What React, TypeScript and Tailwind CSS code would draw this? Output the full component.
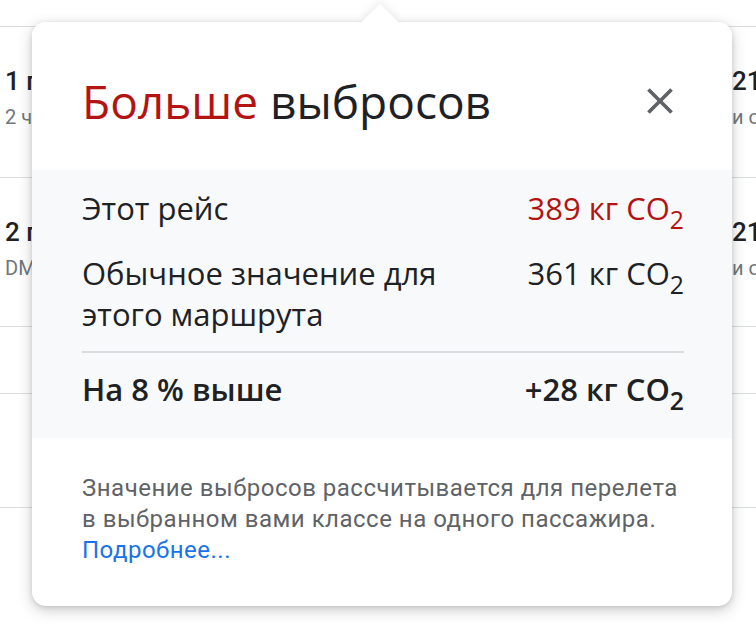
const roboto = { fontFamily: 'Roboto, "Noto Sans", sans-serif' };
const display = { fontFamily: '"Open Sans", "Noto Sans", sans-serif' };

function Co2({ value }: { value: string }) {
  return (
    <span className="whitespace-nowrap">
      {value} кг CO<sub className="relative top-[9px] align-baseline text-[0.8em]">2</sub>
    </span>
  );
}

function ListRow({ h, left, leftSub, right, rightSub }: { h: string; left?: string; leftSub?: string; right?: string; rightSub?: string }) {
  return (
    <div className={`${h} flex justify-between border-b border-[#dadce0]`}>
      <div className="pl-[5px] pt-[36px]">
        {left && <div className="text-[26px] font-medium leading-[36px] text-[#202124]">{left}</div>}
        {leftSub && <div className="mt-[4px] text-[20px] leading-[28px] text-[#70757a]">{leftSub}</div>}
      </div>
      <div className="w-[24px] overflow-hidden pt-[36px] whitespace-nowrap">
        {right && <div className="text-[26px] font-medium leading-[36px] text-[#202124]">{right}</div>}
        {rightSub && <div className="mt-[4px] text-[20px] leading-[28px] text-[#70757a]">{rightSub}</div>}
      </div>
    </div>
  );
}

export default function App() {
  return (
    <div className="relative h-[628px] w-[756px] overflow-hidden bg-white" style={roboto}>
      {/* list behind the popover */}
      <div className="pt-[26px]">
        <div className="border-t border-[#dadce0]" />
        <ListRow h="h-[151px]" left="1 пересадка" leftSub="2 ч 10 мин" right="21 500 ₽" rightSub="и обратно" />
        <ListRow h="h-[149px]" left="2 пересадки" leftSub="DME" right="21 900 ₽" rightSub="и обратно" />
        <ListRow h="h-[67px]" />
        <ListRow h="h-[114px]" />
      </div>

      {/* popover */}
      <div className="absolute left-[32px] top-[22px] w-[700px] rounded-[14px] bg-white shadow-[0_4px_14px_rgba(60,64,67,0.28),0_1px_4px_rgba(60,64,67,0.15)]">
        <div className="absolute -top-[13px] left-[335px] h-[26px] w-[26px] rotate-45 bg-white shadow-[-3px_-3px_6px_rgba(60,64,67,0.08)]" />
        <div className="relative flex h-[148px] items-center justify-between rounded-t-[14px] bg-white pl-[50px] pr-[50px] pt-[10px]" style={display}>
          <h2 className="text-[46px] leading-[52px] text-[#202124]">
            <span className="text-[#b31412]">Больше</span> выбросов
          </h2>
          <svg viewBox="0 0 24 24" className="h-[44px] w-[44px] fill-[#5f6368]">
            <path d="M19 6.41L17.59 5 12 10.59 6.41 5 5 6.41 10.59 12 5 17.59 6.41 19 12 13.41 17.59 19 19 17.59 13.41 12z" />
          </svg>
        </div>
        <div className="bg-[#f8f9fa] pb-[28px] pl-[50px] pr-[48px] pt-[18px] text-[31px] leading-[41px] text-[#202124]" style={display}>
          <div className="flex justify-between">
            <span>Этот рейс</span>
            <span className="text-[#b31412]"><Co2 value="389" /></span>
          </div>
          <div className="mt-[24px] flex justify-between">
            <span className="w-[390px]">Обычное значение для этого маршрута</span>
            <span><Co2 value="361" /></span>
          </div>
          <div className="mt-[16px] border-t-2 border-[#dadce0]" />
          <div className="mt-[16px] flex justify-between font-semibold">
            <span>На 8 % выше</span>
            <span><Co2 value="+28" /></span>
          </div>
        </div>
        <div className="whitespace-nowrap px-[50px] pb-[40px] pt-[35px] text-[24px] leading-[31px] tracking-[0.5px] text-[#5f6368]">
          <p>Значение выбросов рассчитывается для перелета</p>
          <p>в выбранном вами классе на одного пассажира.</p>
          <a className="text-[#1a73e8]">Подробнее...</a>
        </div>
      </div>
    </div>
  );
}
